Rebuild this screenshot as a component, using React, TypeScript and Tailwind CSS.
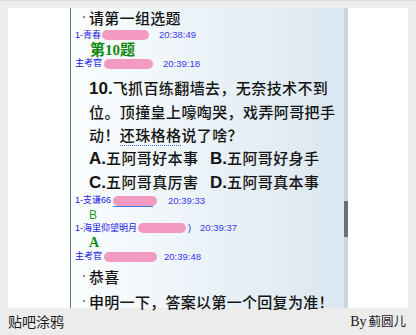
const cjk = '"Noto Sans CJK SC", "Liberation Sans", sans-serif';

interface ChatLine {
  name: string;
  nameW: number;
  blobW: number;
  gap: number;
  time: string;
  tail?: string;
  underline?: boolean;
}

const Blob = ({ w, underline }: { w: number; underline?: boolean }) => (
  <span className="relative inline-block h-[10px] shrink-0" style={{ width: w }}>
    <span className="block h-[10px] w-full rounded-full bg-[#f39ac2]" />
    {underline && <span className="absolute left-0 right-1 top-[10px] h-px bg-[#3d7ee0]" />}
  </span>
);

const Chat = ({ line, h }: { line: ChatLine; h: string }) => (
  <div
    className={`flex items-center pl-[4px] text-[9px] leading-none text-[#1818e6] ${h}`}
    style={{ fontFamily: '"Liberation Sans", "Noto Sans CJK SC", sans-serif' }}
  >
    <span className="shrink-0 whitespace-nowrap" style={{ width: line.nameW }}>
      {line.name}
    </span>
    <Blob w={line.blobW} underline={line.underline} />
    {line.tail && <span className="ml-[2px]">{line.tail}</span>}
    <span className="text-[9.5px] text-[#3a3af2]" style={{ marginLeft: line.gap }}>
      {line.time}
    </span>
  </div>
);

const Bullet = ({ text, h }: { text: string; h: string }) => (
  <div className={`flex items-center pl-[12px] leading-none ${h}`}>
    <span className="mr-[4px] h-[2px] w-[2px] shrink-0 bg-[#8a8a8a]" />
    <span className="whitespace-nowrap text-[15px] font-medium tracking-[0.3px] text-[#141414]">{text}</span>
  </div>
);

const Choice = ({ k, text }: { k: string; text: string }) => (
  <span className="whitespace-nowrap">
    <span className="text-[17px] font-bold tracking-normal" style={{ fontFamily: '"Liberation Sans", sans-serif' }}>
      {k}.
    </span>
    {text}
  </span>
);

export default function App() {
  return (
    <div className="flex h-[335px] w-[416px] flex-col bg-[#ececec]" style={{ fontFamily: cjk }}>
      <div className="h-[8px] border-t border-[#dcdcdc]" />

      {/* white stage */}
      <div className="mx-[8px] flex h-[300px] bg-white">
        <div className="w-[62px]" />

        {/* chat panel */}
        <div className="flex w-[278px] border-l border-[#5b7083] bg-gradient-to-r from-[#fbfdfe] to-[#dae7f1]">
          <div className="flex-1">
            <Bullet text="请第一组选题" h="h-[18px]" />
            <Chat h="h-[18px]" line={{ name: '1-青春', nameW: 27, blobW: 47, gap: 10, time: '20:38:49' }} />
            <div
              className="flex h-[13px] items-center pl-[19px] text-[15px] font-bold leading-none text-[#0f870f]"
              style={{ fontFamily: '"Liberation Serif", "Noto Sans CJK SC", serif' }}
            >
              第10题
            </div>
            <Chat h="h-[13px]" line={{ name: '主考官', nameW: 29, blobW: 49, gap: 10, time: '20:39:18' }} />

            <div className="mt-[6px] pl-[18px] text-[15px] font-medium leading-[23px] tracking-[0.4px] text-[#141414]">
              <div className="whitespace-nowrap">
                <span className="text-[17px] font-bold tracking-normal" style={{ fontFamily: '"Liberation Sans", sans-serif' }}>
                  10.
                </span>
                飞抓百练翻墙去，无奈技术不到
              </div>
              <div className="whitespace-nowrap">位。顶撞皇上嚎啕哭，戏弄阿哥把手</div>
              <div className="whitespace-nowrap">
                动！
                <span className="border-b border-dotted border-[#3b6fd6]">还珠格格</span>
                说了啥？
              </div>
              <div className="grid grid-cols-[121px_1fr]">
                <Choice k="A" text="五阿哥好本事" />
                <Choice k="B" text="五阿哥好身手" />
              </div>
              <div className="grid grid-cols-[121px_1fr]">
                <Choice k="C" text="五阿哥真厉害" />
                <Choice k="D" text="五阿哥真本事" />
              </div>
            </div>

            <Chat h="h-[13px]" line={{ name: '1-支谦66', nameW: 38, blobW: 44, gap: 11, time: '20:39:33', underline: true }} />
            <div
              className="flex h-[15px] items-center pl-[18px] text-[12px] leading-none text-[#2c9a2c]"
              style={{ fontFamily: '"Liberation Sans", sans-serif' }}
            >
              B
            </div>
            <Chat h="h-[12px]" line={{ name: '1-海里仰望明月', nameW: 63, blobW: 48, gap: 9, time: '20:39:37', tail: ')' }} />
            <div
              className="flex h-[17px] items-center pl-[18px] text-[14px] font-bold leading-none text-[#14901a]"
              style={{ fontFamily: '"Liberation Serif", serif' }}
            >
              A
            </div>
            <Chat h="h-[11px]" line={{ name: '主考官', nameW: 29, blobW: 53, gap: 7, time: '20:39:48' }} />
            <Bullet text="恭喜" h="h-[28px]" />
            <Bullet text="申明一下，答案以第一个回复为准！" h="h-[22px]" />
          </div>

          {/* scrollbar */}
          <div className="flex w-[4px] flex-col bg-[#c9d6df]">
            <div className="mt-[193px] h-[36px] bg-[#6b7075]" />
          </div>
        </div>

        <div className="flex-1" />
      </div>

      {/* footer */}
      <div className="flex flex-1 items-center justify-between pl-[8px] pr-[10px] text-[#1a1a1a]">
        <span className="text-[14px]">贴吧涂鸦</span>
        <span className="flex items-baseline">
          <span className="mr-[2px] text-[14px]" style={{ fontFamily: '"Liberation Serif", serif' }}>
            By
          </span>
          <span className="text-[12.5px]">蓟圆儿</span>
        </span>
      </div>
    </div>
  );
}
